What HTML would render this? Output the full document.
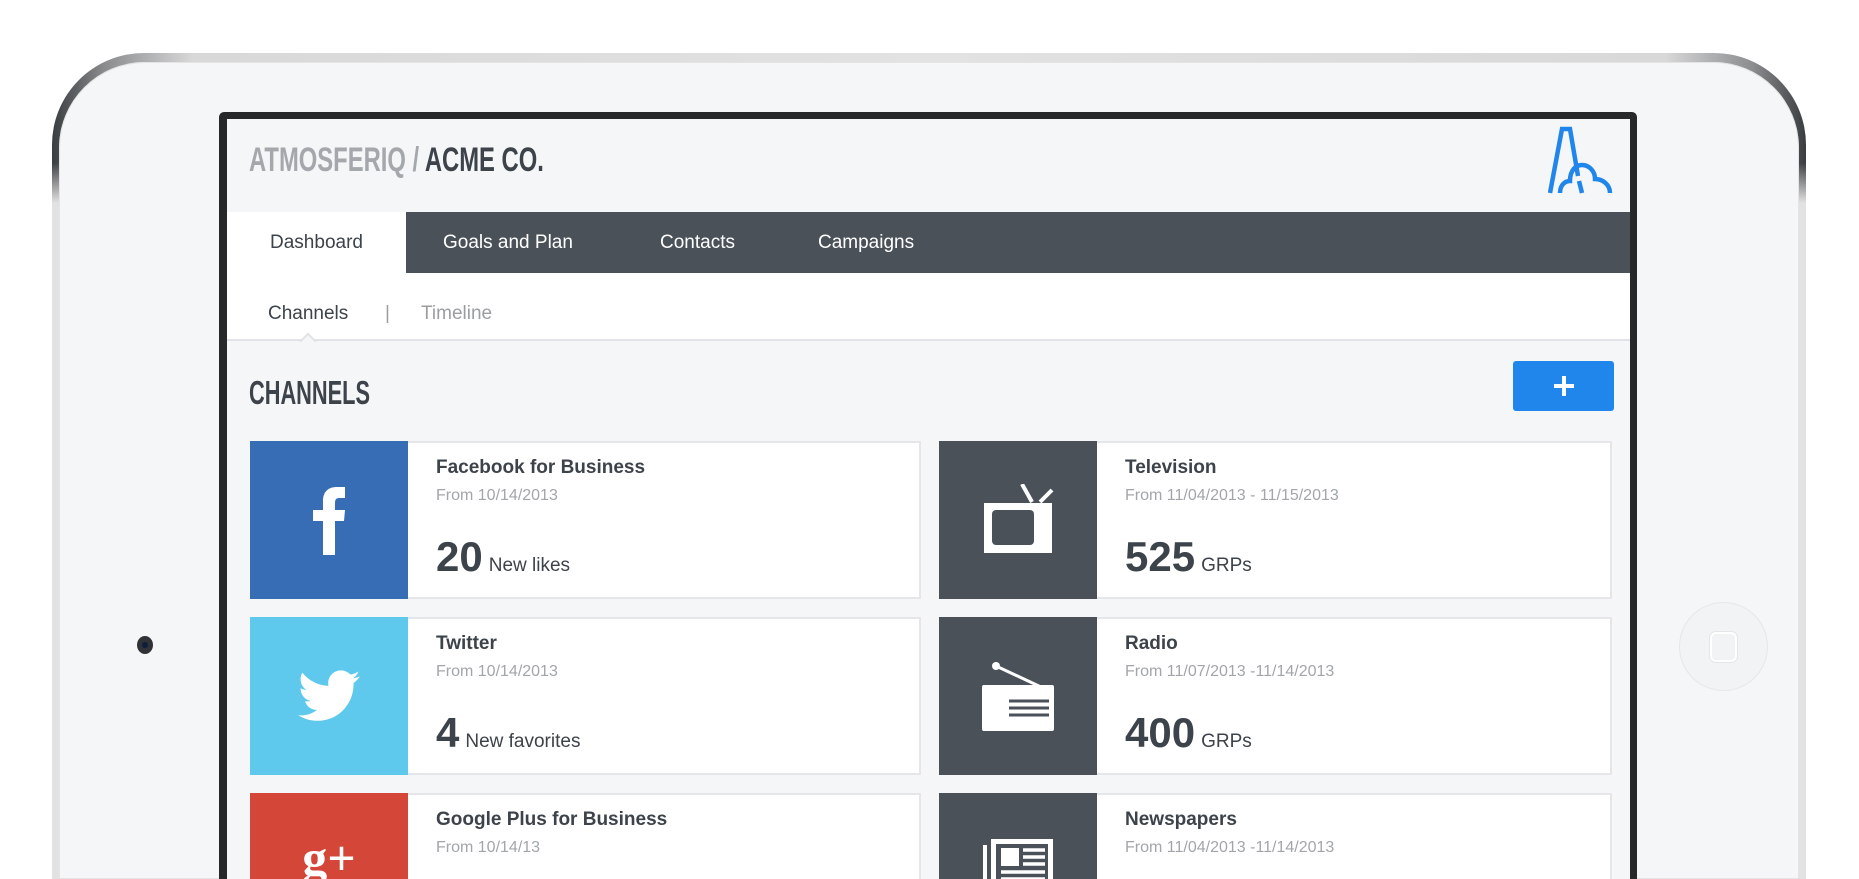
<!DOCTYPE html>
<html style="overflow:hidden;width:1859px;height:879px"><head><meta charset="utf-8"><style>
*{margin:0;padding:0;box-sizing:border-box}
body{width:1859px;height:879px;overflow:hidden;background:#fff;font-family:"Liberation Sans",sans-serif;position:relative}
#wrap{position:absolute;left:0;top:0;width:1859px;height:879px;overflow:hidden}
.abs{position:absolute}
.frame{left:52px;top:53px;width:1754px;height:826px;border-radius:92px 92px 0 0;background:linear-gradient(180deg,rgba(0,0,0,0) 0,rgba(0,0,0,0) 110px,#e2e2e2 150px),linear-gradient(90deg,#3a3d40 0%,#8a8c8e 3%,#d8d8d8 8%,#e2e2e2 50%,#d8d8d8 92%,#8a8c8e 97%,#3a3d40 100%)}
.body{left:59px;top:62px;width:1740px;height:817px;border-radius:86px 86px 0 0;background:#f5f6f7;box-shadow:inset 0 0 0 1px #e4e4e4}
.screen{left:219px;top:112px;width:1418px;height:767px;background:#262829;border-radius:5px 5px 0 0}
.hdr{left:227px;top:119px;width:1403px;height:93px;background:#f5f6f7}
.tabs{left:227px;top:212px;width:1403px;height:61px;background:#4a5159}
.tab{position:absolute;top:0;height:61px;line-height:61px;color:#fff;font-size:19px}
.sub{left:227px;top:273px;width:1403px;height:68px;background:#fff;border-bottom:2px solid #e1e3e6}
.content{left:227px;top:341px;width:1403px;height:538px;background:#f5f6f8}
.card{position:absolute;background:#fff;border:2px solid #e4e6e9}
.ic{position:absolute;left:-2px;top:-2px;width:158px;bottom:-2px;display:flex;align-items:center;justify-content:center}
.t{position:absolute;font-size:19px;font-weight:bold;color:#3d434a;line-height:1;white-space:nowrap}
.d{position:absolute;font-size:16px;color:#a2a6aa;line-height:1;white-space:nowrap}
.n{position:absolute;font-size:42px;font-weight:bold;color:#3d434a;line-height:1;white-space:nowrap}
.n span{font-size:19px;font-weight:normal;margin-left:6px}
</style></head><body><div id="wrap">
<div class="abs frame"></div>
<div class="abs body"></div>
<div class="abs" style="left:137px;top:636px;width:16px;height:18px;border-radius:50%;background:#2f3337"><div style="position:absolute;left:5px;top:6px;width:6px;height:6px;border-radius:50%;background:#0d1e3a"></div></div>
<div class="abs" style="left:1679px;top:602px;width:89px;height:89px;border-radius:50%;background:#f2f3f4;border:1px solid #e6e7e8"><div style="position:absolute;left:30px;top:29px;width:27px;height:30px;border-radius:6px;border:2px solid #fff;box-shadow:0 0 0 1px #e4e5e6"></div></div>
<div class="abs screen"></div>
<div class="abs hdr"></div>
<div class="abs" style="left:249px;top:143px;font-size:34px;font-weight:bold;line-height:1;white-space:nowrap;transform:scaleX(0.7);transform-origin:0 0;color:#a4a8ad">ATMOSFERIQ / <span style="color:#3d434a">ACME CO.</span></div>
<svg class="abs" style="left:1548px;top:126px" width="68" height="70" viewBox="0 0 68 70">
<g fill="none" stroke="#2186eb" stroke-width="4.5">
<path d="M2 67 L14 3 L22 3 L30 50"/>
<path d="M12 67 C12 58 18 55 22 55 C22 44 28 39 34 39 C41 39 47 45 47 53 C55 53 62 59 62 67"/>
<path d="M31 55 L34 67"/>
</g></svg>
<div class="abs tabs">
<div class="tab" style="left:0;width:179px;background:#fff;color:#3d434a;text-align:center">Dashboard</div>
<div class="tab" style="left:216px">Goals and Plan</div>
<div class="tab" style="left:433px">Contacts</div>
<div class="tab" style="left:591px">Campaigns</div>
</div>
<div class="abs sub">
<div class="abs" style="left:41px;top:31px;font-size:19px;color:#3d434a;line-height:1">Channels</div>
<div class="abs" style="left:158px;top:31px;font-size:19px;color:#9a9ea3;line-height:1">|</div>
<div class="abs" style="left:194px;top:31px;font-size:19px;color:#9a9ea3;line-height:1">Timeline</div>
</div>
<div class="abs content"></div>
<div class="abs" style="left:302px;top:335px;width:12px;height:12px;background:#f5f6f8;border-left:2px solid #e1e3e6;border-top:2px solid #e1e3e6;transform:rotate(45deg)"></div>
<div class="abs" style="left:249px;top:376px;font-size:33px;font-weight:bold;line-height:1;color:#3d434a;transform:scaleX(0.66);transform-origin:0 0">CHANNELS</div>
<div class="abs" style="left:1513px;top:361px;width:101px;height:50px;background:#2186eb;border-radius:3px"><div style="position:absolute;left:41px;top:23px;width:20px;height:4px;background:#fff"></div><div style="position:absolute;left:49px;top:15px;width:4px;height:20px;background:#fff"></div></div>

<div class="card" style="left:250px;top:441px;width:671px;height:158px">
<div class="ic" style="background:#366db5"><svg width="40" height="70" viewBox="0 0 40 70"><path d="M14 70 V36 H4 V25 H14 V16 C14 6 20 2 28 2 H36 V13 H30 C27 13 26 15 26 18 V25 H36 L35 36 H26 V70 Z" fill="#fff"/></svg></div>
<div class="t" style="left:184px;top:15px">Facebook for Business</div>
<div class="d" style="left:184px;top:45px">From 10/14/2013</div>
<div class="n" style="left:184px;top:93px">20<span>New likes</span></div>
</div>
<div class="card" style="left:250px;top:617px;width:671px;height:158px">
<div class="ic" style="background:#5ec9ec"><svg width="62" height="52" viewBox="0 0 24 20"><path fill="#fff" d="M24 2.4c-.9.4-1.8.6-2.8.8 1-.6 1.8-1.6 2.2-2.7-1 .6-2 1-3.1 1.2C19.3.7 18 .1 16.6.1c-2.7 0-4.9 2.2-4.9 4.9 0 .4 0 .8.1 1.1C7.7 5.9 4.1 4 1.7 1 1.2 1.7 1 2.6 1 3.5c0 1.7.9 3.2 2.2 4.1-.8 0-1.6-.2-2.2-.6v.1c0 2.4 1.7 4.4 3.9 4.8-.4.1-.8.2-1.3.2-.3 0-.6 0-.9-.1.6 2 2.4 3.4 4.6 3.4-1.7 1.3-3.8 2.1-6.1 2.1-.4 0-.8 0-1.2-.1 2.2 1.4 4.8 2.2 7.5 2.2 9.1 0 14-7.5 14-14v-.6c1-.7 1.8-1.6 2.5-2.6z"/></svg></div>
<div class="t" style="left:184px;top:15px">Twitter</div>
<div class="d" style="left:184px;top:45px">From 10/14/2013</div>
<div class="n" style="left:184px;top:93px">4<span>New favorites</span></div>
</div>
<div class="card" style="left:250px;top:793px;width:671px;height:86px;border-bottom:0">
<div class="ic" style="background:#d44638;align-items:flex-start;padding-top:40px;bottom:0"><div style="color:#fff;font-family:'Liberation Serif',serif;font-size:50px;font-weight:bold;line-height:1">g+</div></div>
<div class="t" style="left:184px;top:15px">Google Plus for Business</div>
<div class="d" style="left:184px;top:45px">From 10/14/13</div>
</div>

<div class="card" style="left:939px;top:441px;width:673px;height:158px">
<div class="ic" style="background:#4a5159"><svg width="72" height="72" viewBox="0 0 72 72"><path d="M40 0 L50 18 M70 6 L58 18" stroke="#fff" stroke-width="4"/><rect x="2" y="19" width="68" height="50" fill="#fff"/><rect x="10" y="26" width="42" height="35" rx="4" fill="#4a5159"/></svg></div>
<div class="t" style="left:184px;top:15px">Television</div>
<div class="d" style="left:184px;top:45px">From 11/04/2013 - 11/15/2013</div>
<div class="n" style="left:184px;top:93px">525<span>GRPs</span></div>
</div>
<div class="card" style="left:939px;top:617px;width:673px;height:158px">
<div class="ic" style="background:#4a5159"><svg width="74" height="70" viewBox="0 0 74 70"><circle cx="15" cy="5" r="4" fill="#fff"/><path d="M15 5 L60 26" stroke="#fff" stroke-width="3"/><rect x="1" y="24" width="72" height="46" rx="2" fill="#fff"/><path d="M28 40 H68 M28 47 H68 M28 54 H68" stroke="#4a5159" stroke-width="3"/></svg></div>
<div class="t" style="left:184px;top:15px">Radio</div>
<div class="d" style="left:184px;top:45px">From 11/07/2013 -11/14/2013</div>
<div class="n" style="left:184px;top:93px">400<span>GRPs</span></div>
</div>
<div class="card" style="left:939px;top:793px;width:673px;height:86px;border-bottom:0">
<div class="ic" style="background:#4a5159;align-items:flex-start;padding-top:44px;bottom:0"><svg width="74" height="60" viewBox="0 0 74 60"><path d="M4 8 V60" stroke="#fff" stroke-width="4"/><rect x="10" y="2" width="62" height="58" fill="#fff"/><rect x="15" y="7" width="52" height="50" fill="#4a5159"/><rect x="20" y="11" width="18" height="18" fill="#fff"/><path d="M42 13 H64 M42 20 H64 M42 27 H64 M20 35 H64 M20 42 H64 M20 49 H64" stroke="#fff" stroke-width="3.5"/></svg></div>
<div class="t" style="left:184px;top:15px">Newspapers</div>
<div class="d" style="left:184px;top:45px">From 11/04/2013 -11/14/2013</div>
</div>
</div></body></html>
